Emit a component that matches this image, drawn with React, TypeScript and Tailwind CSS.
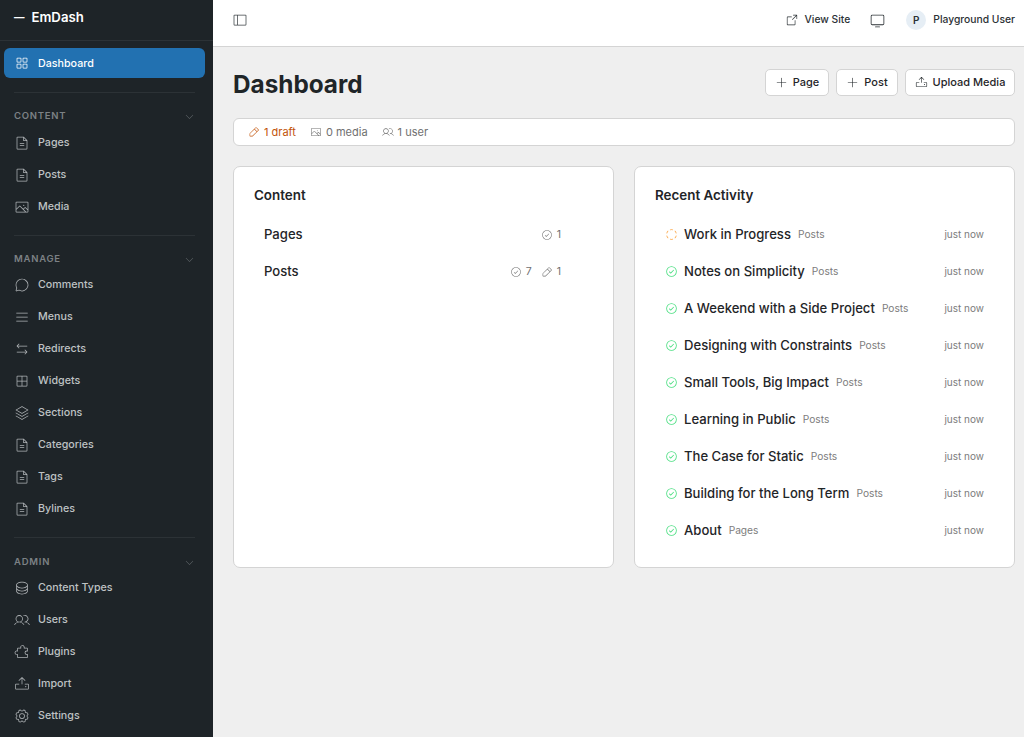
import React from "react";
import {
  PiSquaresFourLight, PiFileTextLight, PiImageLight, PiChatCircleLight, PiListLight, PiArrowsLeftRightLight,
  PiGridFourLight, PiStackLight, PiDatabaseLight, PiUsersLight, PiPuzzlePieceLight,
  PiGearLight, PiArrowSquareOutLight, PiMonitorLight, PiSidebarSimpleLight, PiPlusLight,
  PiPencilSimpleLight, PiCheckCircle, PiCheckCircleLight, PiCircleDashed, PiCaretDownLight, PiUploadLight,
} from "react-icons/pi";

type IconT = React.ComponentType<{ className?: string }>;

function NavItem({ icon: I, label }: { icon: IconT; label: string }) {
  return (
    <div className="flex h-8 items-center gap-[8px] pl-[14px] text-[#bfc2c4]">
      <I className="h-[16px] w-[16px] text-[#aeb2b5]" />
      <span className="text-[10.7px] font-medium">{label}</span>
    </div>
  );
}

function Section({ title, items, itemsGap, after }: { title: string; items: [IconT, string][]; itemsGap: string; after?: string }) {
  return (
    <div>
      <div className="flex h-4 items-center justify-between pl-[14px] pr-[18px]">
        <span className="text-[9.5px] font-semibold uppercase tracking-[0.08em] text-[#7c8185]">{title}</span>
        <PiCaretDownLight className="h-[11px] w-[11px] text-[#6b7074]" />
      </div>
      <div className={itemsGap}>
        {items.map(([i, l]) => <NavItem key={l} icon={i} label={l} />)}
      </div>
      {after && <div className={`ml-[14px] mr-[18px] mt-[12px] h-px bg-[#2c3236] ${after}`} />}
    </div>
  );
}

function Button({ icon: I, label, w }: { icon: IconT; label: string; w: string }) {
  return (
    <div className={`flex h-[27px] items-center justify-center gap-[5px] rounded-[5px] border border-[#d4d4d4] bg-white text-[11px] font-medium text-[#1f2528] ${w}`}>
      <I className="h-[13px] w-[13px]" />
      <span>{label}</span>
    </div>
  );
}

const activity: [string, string, boolean][] = [
  ["Work in Progress", "Posts", false],
  ["Notes on Simplicity", "Posts", true],
  ["A Weekend with a Side Project", "Posts", true],
  ["Designing with Constraints", "Posts", true],
  ["Small Tools, Big Impact", "Posts", true],
  ["Learning in Public", "Posts", true],
  ["The Case for Static", "Posts", true],
  ["Building for the Long Term", "Posts", true],
  ["About", "Pages", true],
];

export default function App() {
  return (
    <div className="flex h-[737px] w-[1024px] overflow-hidden bg-[#efefef] font-['Inter',sans-serif] text-[#1f2528]">
      <aside className="flex w-[213px] shrink-0 flex-col bg-[#1e2428]">
        <div className="flex h-[41px] shrink-0 items-center gap-[7px] border-b border-[#2c3236] pb-[5px] pl-[14px]">
          <span className="text-[10.5px] font-bold text-white">—</span>
          <span className="text-[13.2px] font-semibold text-white">EmDash</span>
        </div>
        <div className="pl-[4px] pr-[8px] pt-[7px]">
          <div className="flex h-[30px] items-center gap-[8px] rounded-[6px] bg-[#2271b1] pl-[10px] text-white">
            <PiSquaresFourLight className="h-[16px] w-[16px]" />
            <span className="pt-[2px] text-[10.7px] font-medium">Dashboard</span>
          </div>
        </div>
        <div className="ml-[14px] mr-[18px] mb-[15px] mt-[14px] h-px bg-[#2c3236]" />
        <Section title="Content" itemsGap="mt-[3px]" after="mb-[15px]" items={[[PiFileTextLight, "Pages"], [PiFileTextLight, "Posts"], [PiImageLight, "Media"]]} />
        <Section title="Manage" itemsGap="mt-[2px]" after="mb-[16px]" items={[
          [PiChatCircleLight, "Comments"], [PiListLight, "Menus"], [PiArrowsLeftRightLight, "Redirects"],
          [PiGridFourLight, "Widgets"], [PiStackLight, "Sections"], [PiFileTextLight, "Categories"],
          [PiFileTextLight, "Tags"], [PiFileTextLight, "Bylines"],
        ]} />
        <Section title="Admin" itemsGap="mt-[2px]" items={[
          [PiDatabaseLight, "Content Types"], [PiUsersLight, "Users"], [PiPuzzlePieceLight, "Plugins"],
          [PiUploadLight, "Import"], [PiGearLight, "Settings"],
        ]} />
      </aside>

      <div className="flex min-w-0 flex-1 flex-col">
        <header className="flex h-[47px] shrink-0 items-center justify-between border-b border-[#d4d4d4] bg-white pb-[6px] pl-[19px] pr-[9px]">
          <PiSidebarSimpleLight className="h-[16px] w-[16px] text-[#3c4246]" />
          <div className="flex items-center text-[10.3px] font-medium text-[#2b3135]">
            <PiArrowSquareOutLight className="h-[14px] w-[14px]" />
            <span className="ml-[6px]">View Site</span>
            <PiMonitorLight className="ml-[19px] h-[17px] w-[17px]" />
            <div className="ml-[20px] flex h-5 w-5 items-center justify-center rounded-full bg-[#e6eef5] text-[10px] font-semibold">P</div>
            <span className="ml-[7px]">Playground User</span>
          </div>
        </header>

        <main className="flex flex-1 flex-col pl-[20px] pr-[9px]">
          <div className="mt-[22px] flex h-[27px] items-center justify-between">
            <h1 className="pt-[4px] text-[24.3px] font-bold">Dashboard</h1>
            <div className="flex gap-[7px]">
              <Button icon={PiPlusLight} label="Page" w="w-[64px]" />
              <Button icon={PiPlusLight} label="Post" w="w-[62px]" />
              <Button icon={PiUploadLight} label="Upload Media" w="w-[110px]" />
            </div>
          </div>

          <div className="mt-[22px] flex h-[28px] items-center gap-[14px] rounded-[6px] border border-[#d4d4d4] bg-white pl-[14px] text-[11px]">
            <span className="flex items-center gap-[4px] text-[#c2540a]"><PiPencilSimpleLight className="h-[12px] w-[12px]" />1 draft</span>
            <span className="flex items-center gap-[4px] text-[#707070]"><PiImageLight className="h-[12px] w-[12px]" />0 media</span>
            <span className="flex items-center gap-[4px] text-[#707070]"><PiUsersLight className="h-[12px] w-[12px]" />1 user</span>
          </div>

          <div className="mt-[20px] grid h-[402px] grid-cols-2 gap-[20px]">
            <section className="rounded-[7px] border border-[#d4d4d4] bg-white pl-[20px] pr-[52px] pt-[20px]">
              <h2 className="text-[13.4px] font-semibold leading-[16px]">Content</h2>
              <div className="mt-[13px]">
                <div className="flex h-[37px] items-center justify-between pl-[10px]">
                  <span className="text-[13.1px] font-medium">Pages</span>
                  <span className="flex items-center gap-[4px] text-[10.5px] text-[#707070]"><PiCheckCircleLight className="h-[12px] w-[12px]" />1</span>
                </div>
                <div className="flex h-[37px] items-center justify-between pl-[10px]">
                  <span className="text-[13.1px] font-medium">Posts</span>
                  <span className="flex items-center gap-[9px] text-[10.5px] text-[#707070]">
                    <span className="flex items-center gap-[4px]"><PiCheckCircleLight className="h-[12px] w-[12px]" />7</span>
                    <span className="flex items-center gap-[4px]"><PiPencilSimpleLight className="h-[12px] w-[12px]" />1</span>
                  </span>
                </div>
              </div>
            </section>

            <section className="rounded-[7px] border border-[#d4d4d4] bg-white pl-[20px] pr-[30px] pt-[20px]">
              <h2 className="text-[13.4px] font-semibold leading-[16px]">Recent Activity</h2>
              <div className="mt-[13px]">
                {activity.map(([t, k, ok]) => (
                  <div key={t} className="flex h-[37px] items-center justify-between pl-[10px]">
                    <div className="flex items-center">
                      {ok
                        ? <PiCheckCircle className="h-[13px] w-[13px] text-[#4ade80]" />
                        : <PiCircleDashed className="h-[13px] w-[13px] text-[#fba94c]" />}
                      <span className="ml-[6px] text-[13.1px] font-medium">{t}</span>
                      <span className="ml-[7px] text-[10.2px] text-[#7c7c7c]">{k}</span>
                    </div>
                    <span className="text-[10px] text-[#7c7c7c]">just now</span>
                  </div>
                ))}
              </div>
            </section>
          </div>
        </main>
      </div>
    </div>
  );
}
